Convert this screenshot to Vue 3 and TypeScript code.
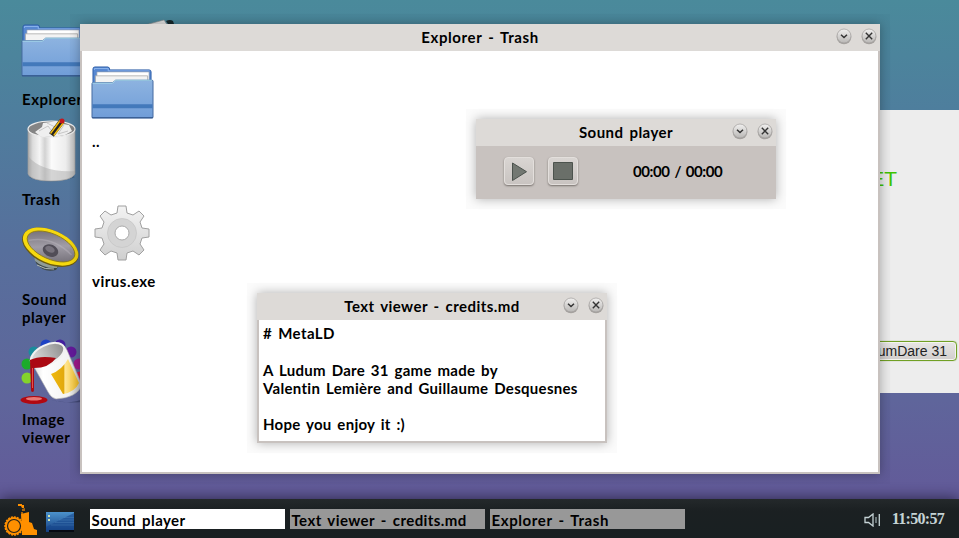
<script setup lang="ts">
import { ref } from 'vue'

interface Shortcut {
  id: string
  label: string
}

interface Task {
  title: string
  fit: string
  active: boolean
}

const shortcuts: Shortcut[] = [
  { id: 'folder', label: 'Explorer' },
  { id: 'trash', label: 'Trash' },
  { id: 'speaker', label: 'Sound player' },
  { id: 'paint', label: 'Image viewer' },
]

const tasks = ref<Task[]>([
  { title: 'Sound player', fit: 'fit-sound', active: true },
  { title: 'Text viewer - credits.md', fit: 'fit-text', active: false },
  { title: 'Explorer - Trash', fit: 'fit-explorer', active: false },
])

const creditLines = [
  { text: '# MetaLD', fit: 'l1' },
  { text: '', fit: '' },
  { text: 'A Ludum Dare 31 game made by', fit: 'l3' },
  { text: 'Valentin Lemière and Guillaume Desquesnes', fit: 'l4' },
  { text: '', fit: '' },
  { text: 'Hope you enjoy it :)', fit: 'l6' },
]

const rainbow = [
  { x: 7, y: 39, c: '#84d32b' },
  { x: 7, y: 25, c: '#1cab2c' },
  { x: 14, y: 13, c: '#1b8c9c' },
  { x: 26, y: 6, c: '#1d41c4' },
  { x: 40, y: 6, c: '#431f9f' },
  { x: 51, y: 13, c: '#641a9b' },
  { x: 59, y: 25, c: '#a0188c' },
  { x: 60, y: 38, c: '#d31a48' },
]

const clock = ref('11:50:57')
</script>

<template>
  <div class="desktop">
    <svg class="defs" width="0" height="0">
      <defs>
        <linearGradient id="folderFront" x1="0" y1="0" x2="0" y2="1">
          <stop offset="0" stop-color="#8db3e0" />
          <stop offset="1" stop-color="#709dd8" />
        </linearGradient>
        <linearGradient id="btnFace" x1="0" y1="0" x2="0" y2="1">
          <stop offset="0" stop-color="#f1f0ef" />
          <stop offset="1" stop-color="#b9b7b5" />
        </linearGradient>
        <linearGradient id="can" x1="0" y1="0" x2="1" y2="0">
          <stop offset="0" stop-color="#a9a9a9" />
          <stop offset=".1" stop-color="#dcdcdc" />
          <stop offset=".25" stop-color="#f5f5f5" />
          <stop offset=".36" stop-color="#d2d2d2" />
          <stop offset=".5" stop-color="#fbfbfb" />
          <stop offset=".8" stop-color="#ededed" />
          <stop offset="1" stop-color="#bdbdbd" />
        </linearGradient>
        <linearGradient id="cone" x1="0" y1="0" x2="1" y2="1">
          <stop offset="0" stop-color="#67626c" />
          <stop offset=".5" stop-color="#a19da6" />
          <stop offset="1" stop-color="#67636c" />
        </linearGradient>
        <linearGradient id="gear" x1="0" y1="0" x2="0" y2="1">
          <stop offset="0" stop-color="#f3f3f3" />
          <stop offset="1" stop-color="#cfcfcf" />
        </linearGradient>
        <linearGradient id="yellow" x1="0" y1="0" x2="1" y2="0">
          <stop offset="0" stop-color="#f0b90d" />
          <stop offset=".45" stop-color="#e2a90d" />
          <stop offset=".5" stop-color="#ffe694" />
          <stop offset="1" stop-color="#f2bd20" />
        </linearGradient>
        <linearGradient id="bucket" x1="0" y1="0" x2="1" y2="0">
          <stop offset="0" stop-color="#d5d5d5" />
          <stop offset=".25" stop-color="#fff" />
          <stop offset=".75" stop-color="#f2f2f2" />
          <stop offset="1" stop-color="#bcbcbc" />
        </linearGradient>
        <linearGradient id="inside" x1="0" y1="0" x2="1" y2="0">
          <stop offset="0" stop-color="#e2e2e2" />
          <stop offset="1" stop-color="#8e8e8e" />
        </linearGradient>
        <linearGradient id="screen" x1="0" y1="0" x2="0" y2="1">
          <stop offset="0" stop-color="#4c92cc" />
          <stop offset="1" stop-color="#143f82" />
        </linearGradient>
        <symbol id="i-folder" viewBox="0 0 64 54" preserveAspectRatio="none">
          <path d="M2 21V3q0-2 2-2h13q2 0 2 3h40q2 0 2 2v16z" fill="#5788d2" stroke="#2f5fa7" />
          <path d="M3.500 4V2.500h14V5h42" fill="none" stroke="#8bb4ee" />
          <path d="M6 6h53v15H6z" fill="#fff" stroke="#8f9cae" stroke-width=".7" />
          <path d="M4.500 10h53v11h-53z" fill="#f3f3f3" stroke="#a7a7a7" stroke-width=".8" />
          <path d="M1 52V18q0-1 1-1h20l3-2.500h37q1 0 1 1V52q0 1-1 1H2q-1 0-1-1z" fill="url(#folderFront)" stroke="#44699f" />
          <path d="M1.500 17.500H22l3-3h37" fill="none" stroke="#a9dcee" />
          <path d="M1.500 39h61v4h-61z" fill="#4379bb" />
          <path d="M1 52.700h62" stroke="#31568b" />
        </symbol>
        <symbol id="i-min" viewBox="0 0 16 17">
          <circle cx="8" cy="9" r="7.300" fill="#8d8a88" opacity=".7" />
          <circle cx="8" cy="8" r="7" fill="url(#btnFace)" stroke="#a19e9c" stroke-width=".7" />
          <path d="M5 6.800l3 2.700 3-2.700" fill="none" stroke="#333" stroke-width="1.500" />
        </symbol>
        <symbol id="i-close" viewBox="0 0 16 17">
          <circle cx="8" cy="9" r="7.300" fill="#8d8a88" opacity=".7" />
          <circle cx="8" cy="8" r="7" fill="url(#btnFace)" stroke="#a19e9c" stroke-width=".7" />
          <path d="M4.800 4.800l6.400 6.400M11.200 4.800l-6.400 6.400" fill="none" stroke="#333" stroke-width="1.400" />
        </symbol>
      </defs>
    </svg>

    <svg class="peek" viewBox="0 0 40 20" width="40" height="20">
      <path d="M1 9L24 3l6 9z" fill="#e5e5e5" stroke="#8d8d8d" stroke-width=".6" />
      <path d="M26 4q4-2 7 0l1 3h-6z" fill="#17282c" />
    </svg>

    <nav class="shortcuts">
      <div v-for="s in shortcuts" :key="s.id" class="shortcut">
        <svg v-if="s.id === 'folder'" class="ic folder" width="63" height="53"><use href="#i-folder" /></svg>
        <svg v-else-if="s.id === 'trash'" class="ic trash" viewBox="0 0 50 64" width="50" height="64">
          <path d="M3 57q20 8 44 0" stroke="#31506f" stroke-width="3" fill="none" opacity=".5" />
          <path d="M1 10v45q3 7 23 7t24-7V10z" fill="url(#can)" stroke="#9b9b9b" stroke-width=".7" />
          <path d="M1 37Q15 54 48 52v3q-4 7-24 7T1 55z" fill="#a7a7a7" opacity=".45" />
          <ellipse cx="24.500" cy="10" rx="23.500" ry="8" fill="#858585" stroke="#ececec" stroke-width="1.200" />
          <path d="M8 13l7-5 1-4 8-1 5-1 7 3 6 1 3 6-7 4-12 2-13-1z" fill="#efefef" />
          <path d="M12 12l9-5 6 8M20 4l10 5M37 6l-6 9 10-3" fill="none" stroke="#c7c7c7" />
          <path d="M24.500 16L35 2" stroke="#222" stroke-width="6" />
          <path d="M23.500 14.500L33.500 1M26.800 16.500L36.500 3.500" stroke="#f1bd13" stroke-width="1.500" />
          <circle cx="35" cy="2" r="2.500" fill="#c4161f" />
        </svg>
        <svg v-else-if="s.id === 'speaker'" class="ic speaker" viewBox="0 0 60 46" width="60" height="46">
          <path d="M11 24l3 11q7 10 20 7l5-8z" fill="#3d4749" />
          <path d="M12 28q9 8 24 9l-1 3q-13 1-22-7z" fill="#8f9b96" />
          <path d="M15 37q8 5 17 4" stroke="#b1bab5" fill="none" />
          <g transform="rotate(24 29 19)">
            <ellipse cx="28.500" cy="19.500" rx="30" ry="17" fill="#6b5a10" />
            <ellipse cx="28.500" cy="18.700" rx="29.500" ry="16.300" fill="#f6d90f" />
            <ellipse cx="28.800" cy="18.500" rx="25.500" ry="12.600" fill="url(#cone)" stroke="#8e7914" stroke-width=".8" />
            <path d="M6 22q20-14 45-4" stroke="#c5c1c8" stroke-width="1.500" fill="none" opacity=".35" />
            <ellipse cx="30" cy="22.500" rx="8" ry="6" fill="#514d57" />
            <ellipse cx="29" cy="21.500" rx="5" ry="3" fill="#77727c" />
          </g>
        </svg>
        <svg v-else class="ic paint" viewBox="0 0 66 66" width="66" height="66">
          <circle v-for="d in rainbow" :key="d.c" :cx="d.x" :cy="d.y" r="5.500" :fill="d.c" />
          <path d="M28 60q20 7 38-1v3q-18 4-38-2z" fill="#30375f" opacity=".6" />
          <path d="M10 21L43 6q2 1 4 5l15 35q-5 13-26 14-5-1-8-7z" fill="url(#bucket)" stroke="#a7a7a7" stroke-width=".6" />
          <path d="M31 35q11-4 17-15l11 24q-4 9-16 11z" fill="url(#yellow)" />
          <ellipse cx="27.500" cy="15.500" rx="18" ry="9.500" transform="rotate(-26 27.500 15.500)" fill="url(#inside)" stroke="#f2f2f2" stroke-width="2" />
          <path d="M10 21q10-5 26-2-7 10-22 10v22q0 2-1.500 2T11 51z" fill="#ab0912" />
          <path d="M12.500 29v20" stroke="#ef655f" stroke-width=".8" />
          <ellipse cx="14" cy="61" rx="13.500" ry="4" fill="#b20810" />
          <ellipse cx="14" cy="59.700" rx="8" ry="1.700" fill="#e97976" />
        </svg>
        <span class="caption">{{ s.label }}</span>
      </div>
    </nav>

    <section class="browser">
      <span class="headline">GET</span>
      <span class="tag">LudumDare 31</span>
    </section>

    <section class="window explorer">
      <header class="bar">
        <h1 class="fit-explorer">Explorer - Trash</h1>
        <div class="controls">
          <svg width="16" height="17"><use href="#i-min" /></svg>
          <svg width="16" height="17"><use href="#i-close" /></svg>
        </div>
      </header>
      <div class="files">
        <div class="file">
          <svg class="f-folder" width="63" height="53"><use href="#i-folder" /></svg>
          <span>..</span>
        </div>
        <div class="file">
          <svg class="f-gear" viewBox="-29 -29 58 58" width="58" height="58">
            <path
              d="M-5-20L-4-27H4L5-20 11-18 17-22 22-17 18-11 20-5 27-4V4L20 5 18 11 22 17 17 22 11 18 5 20 4 27H-4L-5 20-11 18-17 22-22 17-18 11-20 5-27 4V-4L-20-5-18-11-22-17-17-22-11-18z"
              fill="url(#gear)" stroke="#a0a0a0" stroke-linejoin="round" />
            <circle r="14.500" fill="#d4d4d4" stroke="#c4c4c4" stroke-width=".7" />
            <circle r="7" fill="#fff" stroke="#aaa" />
          </svg>
          <span class="fit-virus">virus.exe</span>
        </div>
      </div>
    </section>

    <section class="window player">
      <header class="bar">
        <h1 class="fit-sound">Sound player</h1>
        <div class="controls">
          <svg width="16" height="17"><use href="#i-min" /></svg>
          <svg width="16" height="17"><use href="#i-close" /></svg>
        </div>
      </header>
      <div class="deck">
        <button class="key" type="button">
          <svg viewBox="0 0 28 26" width="28" height="26">
            <path d="M7.500 5v17.500L21.500 13.700z" fill="#737872" stroke="#4b524d" stroke-linejoin="round" />
          </svg>
        </button>
        <button class="key" type="button">
          <svg viewBox="0 0 28 26" width="28" height="26">
            <path d="M4.500 4.500h19v17h-19z" fill="#6a6f69" stroke="#4c534d" />
          </svg>
        </button>
        <span class="time">00:00 / 00:00</span>
      </div>
    </section>

    <section class="window viewer">
      <header class="bar">
        <h1 class="fit-text">Text viewer - credits.md</h1>
        <div class="controls">
          <svg width="16" height="17"><use href="#i-min" /></svg>
          <svg width="16" height="17"><use href="#i-close" /></svg>
        </div>
      </header>
      <div class="page">
        <p v-for="(line, i) in creditLines" :key="i"><span :class="line.fit">{{ line.text }}</span></p>
      </div>
    </section>

    <footer class="taskbar">
      <svg class="logo" viewBox="0 0 34 32" width="34" height="32">
        <path d="M14 0h4v1h2v3h-2l-1-2h-3z" fill="#ff9000" />
        <path d="M18 5l3-1v3h-3zM17 8h2v2h-2z" fill="#a9640c" />
        <path d="M17 10l8-2v10l3 1 2 6 3 1v5H18z" fill="#ff9000" />
        <circle cx="10" cy="22" r="9" fill="#ff9000" stroke="#ff9000" stroke-width="1.500" stroke-dasharray="2 1" />
        <circle cx="10" cy="22" r="6.500" fill="none" stroke="#26221a" stroke-width="1.200" />
      </svg>
      <svg class="show" viewBox="0 0 28 20" width="28" height="20">
        <path d="M0 0h28v20H0z" fill="url(#screen)" />
        <path d="M0 15L28 1v17H0z" fill="#14438a" opacity=".55" />
        <path d="M13 8h15M9 10.500h19M5 13h23M18 5.500h10" stroke="#6fa4d5" stroke-width=".6" opacity=".4" />
        <path d="M2 3h2v2H2zM2 7h2v2H2z" fill="#d3e5ac" />
        <path d="M3 18h25v2H3z" fill="#060a12" />
      </svg>
      <div class="tasks">
        <div v-for="t in tasks" :key="t.title" class="task" :class="{ active: t.active }">
          <span :class="t.fit">{{ t.title }}</span>
        </div>
      </div>
      <svg class="volume" viewBox="0 0 17 14" width="17" height="14">
        <path d="M1 4.500h3.500L9 1v12L4.500 9.500H1z" fill="none" stroke="#c5d3d5" stroke-width="1.300" />
        <path d="M12 4v6" stroke="#a1b0b2" stroke-width="1.200" />
        <path d="M15.300 1v12" stroke="#c5d3d5" stroke-width="1.300" />
      </svg>
      <time class="clock">{{ clock }}</time>
    </footer>
  </div>
</template>

<style>
body {
  margin: 0;
  overflow: hidden;
}
</style>

<style scoped>
.desktop {
  position: relative;
  box-sizing: border-box;
  width: 959px;
  height: 538px;
  overflow: hidden;
  background: linear-gradient(#4a8a9b 0, #4e7e9d 110px, #576f9c 250px, #5f659b 400px, #625b99 490px);
  font: bold 15px/18.3px Lato, "Liberation Sans", sans-serif;
  font-variant-ligatures: none;
  letter-spacing: .4px;
  word-spacing: 1.900px;
  color: #000;
}
.fit-explorer {
  letter-spacing: .6px;
}
.fit-sound {
  letter-spacing: .45px;
}
.fit-text {
  letter-spacing: .43px;
}
.fit-virus {
  letter-spacing: .5px;
}
.l1 {
  letter-spacing: .45px;
}
.l3 {
  letter-spacing: .27px;
}
.l4 {
  letter-spacing: .3px;
}
.l6 {
  letter-spacing: .27px;
}
.defs {
  position: absolute;
}
.peek {
  position: absolute;
  left: 140px;
  top: 17px;
}
.shortcuts {
  padding: 24px 0 0 22px;
  display: grid;
  grid-template-rows: 95px 100px 120px 120px;
}
.shortcut {
  width: 68px;
  display: flex;
  flex-direction: column;
  align-items: flex-start;
}
.ic {
  flex: none;
  overflow: visible;
}
.caption {
  letter-spacing: .55px;
}
.folder {
  margin: 0 0 13px -1px;
}
.trash {
  margin: 0 0 7px 5px;
}
.speaker {
  margin: 9px 0 16px 0;
}
.paint {
  margin: 0 0 5px -2px;
}
.browser {
  position: absolute;
  box-sizing: border-box;
  left: 500px;
  top: 110px;
  width: 459px;
  height: 283px;
  padding: 57px 2px 0;
  background: #ededed;
  display: flex;
  flex-direction: column;
  align-items: flex-end;
  font-family: "Liberation Sans", sans-serif;
  font-weight: normal;
  letter-spacing: 0;
  word-spacing: 0;
}
.headline {
  margin-right: 60px;
  font-size: 21px;
  line-height: 24px;
  color: #3fc400;
}
.tag {
  box-sizing: border-box;
  height: 20px;
  margin-top: 150px;
  padding: 0 9px 0 20px;
  border: 1px solid #71a025;
  border-radius: 4px;
  background: linear-gradient(#e8e6e5, #d1cecd);
  box-shadow: inset 0 0 0 1px #f4f4f0, 0 0 1px #7ea642;
  font-size: 14px;
  line-height: 18px;
  color: #222;
}
.window {
  position: absolute;
  box-sizing: border-box;
  display: flex;
  flex-direction: column;
  background: #fff;
  border: solid #c8c2bf;
  border-width: 0 2px 2px;
  box-shadow: 0 0 10px rgba(0, 0, 0, .3), 0 0 0 10px rgba(0, 0, 0, .015);
}
.explorer {
  left: 80px;
  top: 24px;
  width: 800px;
  height: 450px;
}
.player {
  left: 476px;
  top: 119px;
  width: 300px;
  height: 80px;
}
.viewer {
  left: 257px;
  top: 293px;
  width: 350px;
  height: 150px;
}
.bar {
  flex: none;
  height: 27px;
  margin: 0 -2px;
  background: #dddad7;
  display: grid;
  grid-template-columns: 60px 1fr 60px;
  align-items: center;
}
.bar h1 {
  grid-column: 2;
  margin: 0;
  font: inherit;
  font-variant-ligatures: none;
  text-align: center;
  white-space: nowrap;
}
.controls {
  display: flex;
  justify-content: flex-end;
  gap: 9px;
  padding: 0 3.500px 2px 0;
}
.files {
  padding: 15px 9px;
  display: grid;
  grid-template-rows: 139px 100px;
}
.file {
  display: flex;
  flex-direction: column;
  align-items: flex-start;
}
.file span {
  margin-left: 1px;
}
.f-folder {
  margin-bottom: 13px;
}
.f-gear {
  margin: -1px 0 10px 2px;
}
.deck {
  flex: 1;
  padding-left: 26px;
  display: flex;
  align-items: flex-start;
  background: #c8c2bf;
}
.key {
  box-sizing: border-box;
  width: 30px;
  height: 28px;
  margin: 11px 14px 0 0;
  padding: 0;
  border: 1px solid #e3dfdc;
  border-radius: 4px;
  background: linear-gradient(#d9d5d2, #c9c4c1);
  box-shadow: 0 1px 2px #77716d;
}
.key svg {
  display: block;
}
.time {
  margin: 16px 0 0 41px;
  letter-spacing: -.4px;
  word-spacing: 1.500px;
}
.page {
  padding: 4px 4px;
}
.page p {
  height: 18.3px;
  margin: 0;
  white-space: nowrap;
}
.taskbar {
  position: absolute;
  box-sizing: border-box;
  left: 0;
  right: 0;
  bottom: 0;
  height: 39px;
  padding: 0 15px 0 4px;
  display: flex;
  align-items: flex-start;
  background: linear-gradient(#24292b, #1b2022 30%, #192022);
  box-shadow: 0 -1px 14px rgba(20, 15, 40, .65);
}
.logo {
  margin-top: 5px;
}
.show {
  margin: 13px 0 0 8px;
}
.tasks {
  margin: 10px 0 0 16px;
  display: flex;
  gap: 5px;
}
.task {
  box-sizing: border-box;
  width: 195px;
  height: 20px;
  padding: 2px 1.500px 0;
  background: #989898;
  white-space: nowrap;
}
.task.active {
  background: #fff;
}
.volume {
  margin: 14px 0 0 auto;
}
.clock {
  margin: 10px 0 0 11px;
  font: bold 16px/20px "Liberation Serif", serif;
  letter-spacing: -.7px;
  color: #c5d3d5;
}
</style>
